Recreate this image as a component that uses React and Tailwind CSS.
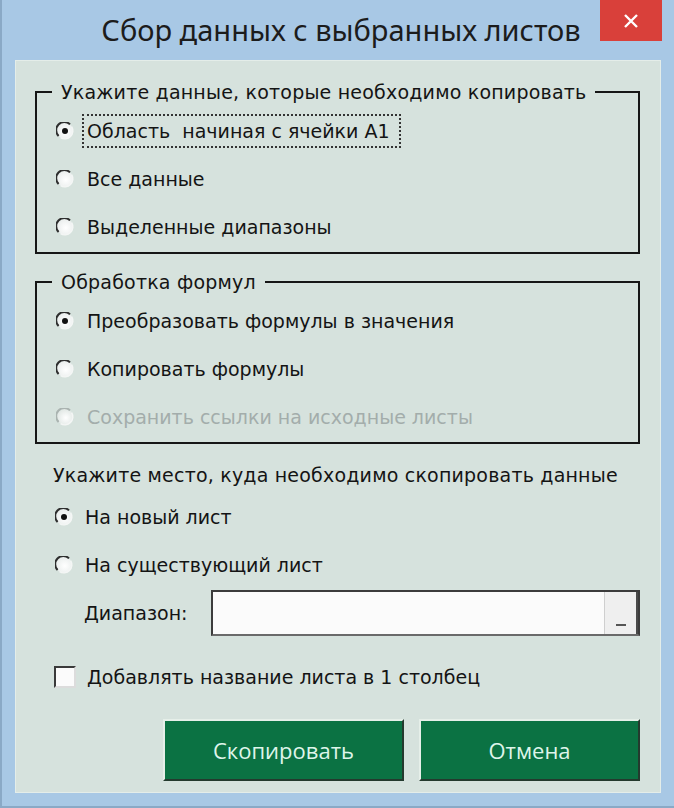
import React from 'react';

const uiFont = { fontFamily: '"DejaVu Sans", "Liberation Sans", sans-serif' };

function Radio({ checked, disabled }) {
  return (
    <svg width="18" height="18" viewBox="0 0 18 18" className="shrink-0">
      <defs>
        <radialGradient id={disabled ? 'rgd' : 'rg'} cx="0.55" cy="0.55" r="0.6">
          <stop offset="0" stopColor="#ffffff" />
          <stop offset="1" stopColor={disabled ? '#dfe6e3' : '#e9edec'} />
        </radialGradient>
      </defs>
      <circle cx="9" cy="9" r="8" fill={`url(#${disabled ? 'rgd' : 'rg'})`} />
      <path d="M2.6 14 A8 8 0 0 1 14 2.4" fill="none" stroke={disabled ? '#aab3b0' : '#2e2e2e'} strokeWidth="2" />
      <path d="M15.6 4.6 A8 8 0 0 1 4.6 15.6" fill="none" stroke="#f4f6f5" strokeWidth="1.6" />
      {checked && <circle cx="9" cy="9" r="3" fill="#111" />}
    </svg>
  );
}

function Option({ label, checked, disabled, focus, gap = 'gap-[13px]' }) {
  return (
    <div className={`flex items-center h-[48px] ${gap}`}>
      <Radio checked={checked} disabled={disabled} />
      <span
        className={`whitespace-pre text-[19px] leading-[24px] ${disabled ? 'text-[#a3adab]' : 'text-[#141414]'} ${
          focus ? 'outline-2 outline-dotted outline-[#333] outline-offset-[3px] pr-[6px]' : ''
        }`}
      >
        {label}
      </span>
    </div>
  );
}

function Group({ title, children, className = '' }) {
  return (
    <fieldset className={`border-2 border-[#161616] ml-[19px] mr-[20px] pl-[19px] pt-[3px] pb-[1px] ${className}`}>
      <legend className="-ml-[4px] px-[9px] text-[19px] leading-[24px] text-[#141414] tracking-[0.2px]">{title}</legend>
      {children}
    </fieldset>
  );
}

export default function App() {
  return (
    <div className="w-[674px] h-[808px] bg-[#a8c8e5] flex flex-col border-l-2 border-b-2 border-[#8aa9c6]" style={uiFont}>
      {/* title bar */}
      <div className="h-[60px] flex items-start relative shrink-0">
        <div
          className="flex-1 text-center pt-[10px] text-[29px] leading-[40px] text-[#1c1c1c] pl-[6px]"
          style={{ fontFamily: '"Noto Sans", "Open Sans", sans-serif' }}
        >
          Сбор данных с выбранных листов
        </div>
        <div className="absolute right-[12px] top-0 w-[62px] h-[41px] bg-[#d9403a] flex items-center justify-center">
          <svg width="16" height="16" viewBox="0 0 16 16">
            <path d="M2 2 L14 14 M14 2 L2 14" stroke="#fff" strokeWidth="2.4" />
          </svg>
        </div>
      </div>

      {/* client area */}
      <div className="ml-[13px] mr-[13px] mb-[13px] flex-1 bg-[#d6e2dd] border border-[#e4ede9] flex flex-col pt-[19px]">
        <Group title="Укажите данные, которые необходимо копировать">
          <Option label="Область  начиная с ячейки А1" checked focus />
          <Option label="Все данные" />
          <Option label="Выделенные диапазоны" />
        </Group>

        <Group title="Обработка формул" className="mt-[16px]">
          <Option label="Преобразовать формулы в значения" checked />
          <Option label="Копировать формулы" />
          <Option label="Сохранить ссылки на исходные листы" disabled />
        </Group>

        <div className="mt-[19px] pl-[37px] text-[19px] leading-[24px] text-[#141414] tracking-[0.2px]">
          Укажите место, куда необходимо скопировать данные
        </div>
        <div className="mt-[6px] pl-[39px]">
          <Option label="На новый лист" checked gap="gap-[12px]" />
          <Option label="На существующий лист" gap="gap-[12px]" />
        </div>

        <div className="mt-[1px] flex items-center pl-[68px] pr-[20px]">
          <span className="text-[19px] leading-[24px] text-[#141414] w-[127px]">Диапазон:</span>
          <div className="flex-1 h-[46px] flex bg-[#fbfbfb] border-2 border-[#3c3c3c] border-b-[#6a6a6a]">
            <div className="flex-1" />
            <div className="w-[34px] bg-[#efefef] border-l border-[#cfcfcf] border-r-2 border-r-[#4a4a4a] flex items-end justify-center pb-[8px]">
              <span className="block w-[10px] h-[2px] bg-[#555]" />
            </div>
          </div>
        </div>

        <div className="mt-[17px] h-[48px] flex items-center pl-[38px] gap-[11px]">
          <span className="w-[22px] h-[22px] bg-[#fbfbfb] border-2 border-[#3a3a3a] border-r-[#dcdcdc] border-b-[#dcdcdc] shrink-0" />
          <span className="text-[19px] leading-[24px] text-[#141414]">Добавлять название листа в 1 столбец</span>
        </div>

        <div className="mt-[18px] flex justify-end gap-[15px] pr-[20px]">
          {['Скопировать', 'Отмена'].map((t, i) => (
            <button
              key={t}
              className={`${i === 0 ? 'w-[241px]' : 'w-[221px]'} h-[62px] bg-[#0b7243] text-[#def5ea] text-[22px] border-2 border-[#e6efe9] border-r-[#243a2e] border-b-[#243a2e]`}
              style={{ fontFamily: '"Open Sans", "Noto Sans", sans-serif' }}
            >
              {t}
            </button>
          ))}
        </div>
      </div>
    </div>
  );
}
